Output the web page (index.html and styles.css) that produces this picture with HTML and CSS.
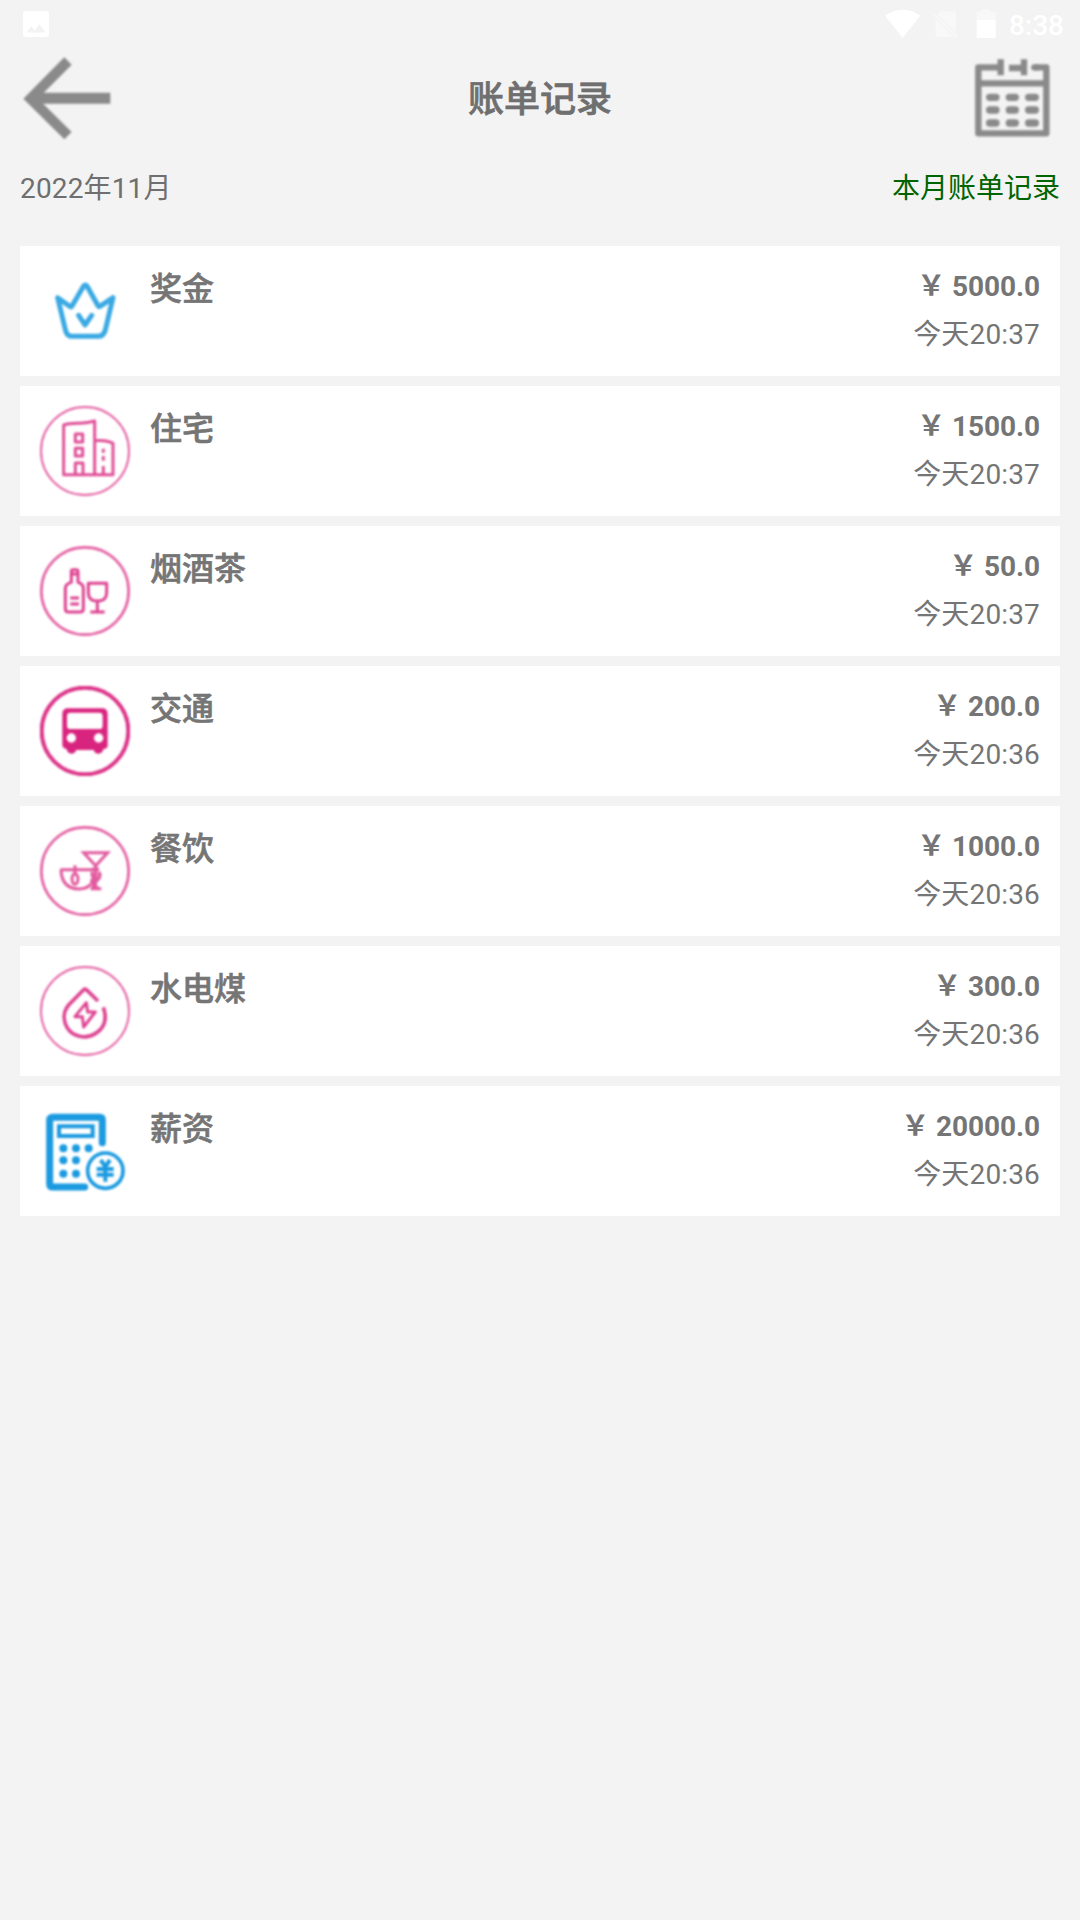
FILE: index.html
```html
<!DOCTYPE html>
<html lang="zh-CN">
<head>
<meta charset="utf-8">
<title>账单记录</title>
<link rel="stylesheet" href="styles.css">
</head>
<body>
<div class="status">
  <svg class="status-photo" viewBox="0 0 26 26"><path fill="#fff" fill-rule="evenodd" d="M3 0H23Q26 0 26 3V23Q26 26 23 26H3Q0 26 0 23V3Q0 0 3 0ZM3.500 21.500H22.700L16.500 13.300L11.500 19.500L8.300 15.500Z"/></svg>
  <div class="status-right">
    <svg class="status-icons" viewBox="190 24 340 96">
      <path fill="#fff" d="M193 47Q246 12 299 47L246 114Z"/>
      <path fill="#f8f8f8" d="M345 57L399 111H352Q345 111 345 104ZM361 34H400Q406 34 406 40V99L350 44Z"/>
      <path stroke="#f8f8f8" stroke-width="6" d="M338 40L410 113"/>
      <path fill="#f8f8f8" d="M468 60V35H483V28H508V35H525V60Z"/>
      <path fill="#fff" d="M468 60H525V114H468Z"/>
    </svg>
    <span class="clock">8:38</span>
  </div>
</div>
<header class="header">
  <svg class="back" viewBox="60 158 285 276"><g fill="none" stroke="#8a8a8a" stroke-width="31"><path d="M204 182L92 295L204 406"/><path stroke-width="33" d="M100 294H331"/></g></svg>
  <h1 class="title">账单记录</h1>
  <svg class="calendar" viewBox="443 158 270 270">
    <g fill="none" stroke="#8a8a8a" stroke-width="19">
      <path stroke-linejoin="round" d="M540 201H474V399H678V201H642"/>
      <path d="M474 249H678M541 177V225M611 177V225M566 203H611"/>
      <path stroke-linecap="round" d="M642 201H650"/>
      <g stroke-width="22" stroke-linecap="round"><path d="M508 291H527M567 291H585M625 291H645M508 329H527M567 329H585M625 329H645M508 368H527M567 368H585M625 368H645"/></g>
    </g>
  </svg>
</header>
<div class="period"><span class="month">2022年11月</span><span class="month-link">本月账单记录</span></div>
<main class="bills">
  <article class="bill">
    <svg class="icon blue" viewBox="120 93 270 270"><g fill="none" stroke-width="15" stroke-linejoin="round" stroke-linecap="round"><path d="M173 188L211 215Q214 217 216 213L251 153Q256 147 261 153L294 212Q297 217 300 214L339 188L316 285Q311 304 294 304H216Q202 304 197 288Z"/><path d="M236 241L255 270L275 241"/></g></svg>
    <h2 class="name">奖金</h2>
    <div class="detail"><strong class="amount">￥ 5000.0</strong><span class="time">今天20:37</span></div>
  </article>
  <article class="bill">
    <svg class="icon pink" viewBox="120 78 270 270"><circle class="ring" cx="255" cy="213" r="132" stroke-width="6"/><g fill="none" stroke-width="9" stroke-linejoin="round" opacity=".8"><path d="M191 284V135Q207 129 240 130Q265 128 284 123V284ZM284 182Q320 179 339 190V284H284"/><path d="M226 162H248V186H226ZM226 205H248V228H226ZM226 284V249H249V284"/><path d="M310 206V218M310 228V242M310 258V284"/></g></svg>
    <h2 class="name">住宅</h2>
    <div class="detail"><strong class="amount">￥ 1500.0</strong><span class="time">今天20:37</span></div>
  </article>
  <article class="bill">
    <svg class="icon pink" viewBox="120 78 270 270"><circle class="ring" cx="255" cy="213" r="131" stroke-width="8"/><g fill="none" stroke-width="9" stroke-linejoin="round" opacity=".85"><path d="M214 187V154Q214 149 219 149H229Q234 149 234 154V187Q250 191 250 205V266Q250 276 240 276H206Q196 276 196 266V205Q196 192 214 187Z"/><path d="M214 162H234M211 234H237M211 252H237M265 190H320V218Q320 243 292 243Q265 243 265 218ZM292 243V276M271 276H314"/></g></svg>
    <h2 class="name">烟酒茶</h2>
    <div class="detail"><strong class="amount">￥ 50.0</strong><span class="time">今天20:37</span></div>
  </article>
  <article class="bill">
    <svg class="icon pink" viewBox="120 78 270 270"><circle class="ring solid" cx="255" cy="213" r="130" stroke-width="12"/><path class="fill" fill-rule="evenodd" d="M204 145H306Q323 145 323 162V257Q323 265 310 268Q307 281 295 281Q284 281 281 270H229Q225 281 214 281Q203 281 200 268Q187 264 187 256V162Q187 145 204 145ZM211 158Q201 158 201 168V197Q201 207 211 207H298Q308 207 308 197V168Q308 158 298 158ZM200 234a14 14 0 1 0 28 0a14 14 0 1 0-28 0M282 234a14 14 0 1 0 28 0a14 14 0 1 0-28 0"/></svg>
    <h2 class="name">交通</h2>
    <div class="detail"><strong class="amount">￥ 200.0</strong><span class="time">今天20:36</span></div>
  </article>
  <article class="bill">
    <svg class="icon pink" viewBox="120 78 270 270"><circle class="ring" cx="255" cy="213" r="131" stroke-width="8"/><g fill="none" stroke-width="9" opacity=".75"><path d="M251 158H323L287 197ZM287 197V264M272 266H304M181 209H285M183 209Q185 267 238 267Q260 267 272 253M225 196V222"/><ellipse cx="225" cy="237" rx="9" ry="16"/><path stroke-width="11" d="M276 208H297M278 216Q274 226 283 233Q274 241 276 248Q282 252 280 264H296M296 216Q303 228 294 238Q283 245 287 250"/></g></svg>
    <h2 class="name">餐饮</h2>
    <div class="detail"><strong class="amount">￥ 1000.0</strong><span class="time">今天20:36</span></div>
  </article>
  <article class="bill">
    <svg class="icon pink" viewBox="120 78 270 270"><circle class="ring" cx="255" cy="213" r="132" stroke-width="6"/><g fill="none" stroke-linejoin="round" opacity=".85"><path stroke-width="11" d="M294 183L259 149Q255 146 251 149L208 193C190 213 188 239 201 262C217 290 258 299 286 281C313 264 322 236 310 202"/><path stroke-width="9" d="M259 188L225 230H247L251 261L286 216H263Z"/></g></svg>
    <h2 class="name">水电煤</h2>
    <div class="detail"><strong class="amount">￥ 300.0</strong><span class="time">今天20:36</span></div>
  </article>
  <article class="bill">
    <svg class="icon calc" viewBox="120 78 270 270"><g fill="none" stroke-width="21" stroke-linecap="round" stroke-linejoin="round"><path d="M307 188V120Q307 112 299 112H159Q149 112 149 122V311Q149 321 159 321H254"/><path stroke-width="12" stroke-linejoin="miter" d="M177 139H278V168H177Z"/><circle stroke-width="11" cx="316" cy="272" r="53"/><path stroke-width="24" d="M190 205h.1M228 205h.1M266 205h.1M190 241h.1M228 241h.1M190 281h.1M228 281h.1"/><path stroke-width="12" stroke-linecap="butt" d="M302 240L316 260L330 240M316 256V305M290 267H341M290 284H341"/></g></svg>
    <h2 class="name">薪资</h2>
    <div class="detail"><strong class="amount">￥ 20000.0</strong><span class="time">今天20:36</span></div>
  </article>
</main>
</body>
</html>
```

FILE: styles.css
```css
* { box-sizing: border-box; }
body {
  margin: 0;
  min-height: 1920px;
  background: #f3f3f3;
  color: #6f6f6f;
  font: 28px/36px Roboto, "Noto Sans CJK SC", sans-serif;
}
svg { display: block; flex: none; }
.status {
  display: flex;
  justify-content: space-between;
  height: 48px;
  padding: 0 16px 0 23px;
}
.status-photo { width: 26px; height: 26px; margin-top: 11px; }
.status-right { display: flex; }
.status-icons { width: 113.33px; height: 32px; margin: 8px 12px 0 0; }
.clock { color: #fff; font-weight: 500; line-height: 51px; }
.header {
  display: flex;
  align-items: center;
  justify-content: space-between;
  height: 100px;
  padding: 0 22px 0 20px;
}
.back { width: 95px; height: 92px; margin-top: 2px; filter: blur(.8px); }
.title {
  margin: 0;
  padding: 4px 3px 0 0;
  font-size: 36px;
  line-height: 48px;
  font-weight: 500;
  -webkit-text-stroke: .7px currentColor;
}
.calendar { width: 90px; height: 90px; filter: blur(1px); }
.period {
  display: flex;
  justify-content: space-between;
  padding: 23px 20px 0;
  height: 98px;
  line-height: 36px;
}
.month { letter-spacing: .15px; }
.month-link { color: #006400; }
.bills { display: flex; flex-direction: column; gap: 10px; padding: 0 20px; }
.bill {
  display: flex;
  height: 130px;
  padding: 20px;
  background: #fff;
  color: #757575;
}
.icon { width: 90px; height: 90px; filter: blur(.8px); }
.blue { stroke: #3aa9e3; }
.calc { stroke: #1b9ae0; }
.pink { stroke: #d9247f; }
.ring { fill: none; opacity: .72; }
.solid { opacity: .92; }
.fill { fill: #d9247f; stroke: none; }
.name {
  flex: 1;
  margin: 1px 0 0 20px;
  font-size: 32px;
  line-height: 44px;
  font-weight: 500;
  -webkit-text-stroke: .6px currentColor;
}
.detail {
  display: flex;
  flex-direction: column;
  align-items: flex-end;
  gap: 8px;
  margin-top: 1px;
  line-height: 40px;
}
.amount { font-weight: 700; letter-spacing: -.08px; }
.time { letter-spacing: .15px; }
```
